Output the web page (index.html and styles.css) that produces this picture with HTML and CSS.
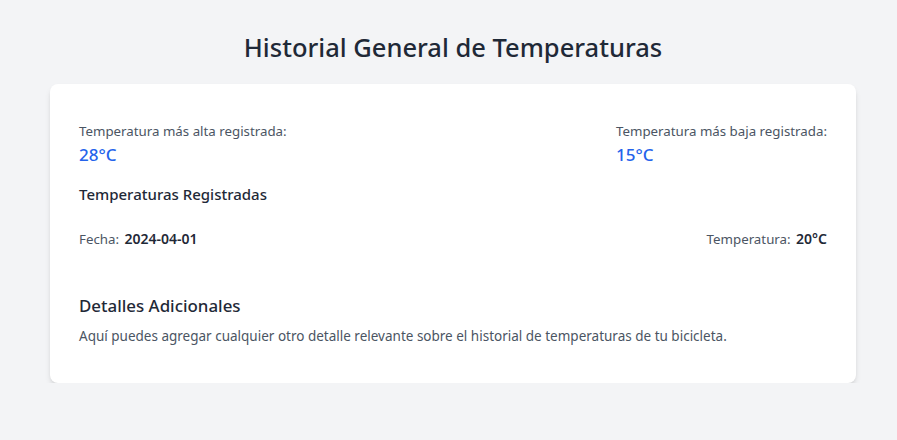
FILE: index.html
```html
<!DOCTYPE html>
<html lang="es">
<head>
<meta charset="utf-8">
<link rel="stylesheet" href="styles.css">
</head>
<body>
<main class="page">
  <h1 class="title">Historial General de Temperaturas</h1>
  <section class="card">
    <div class="extremes">
      <div class="stat">
        <p class="stat-label">Temperatura más alta registrada:</p>
        <p class="stat-value">28°C</p>
      </div>
      <div class="stat">
        <p class="stat-label">Temperatura más baja registrada:</p>
        <p class="stat-value">15°C</p>
      </div>
    </div>
    <h2 class="section-title">Temperaturas Registradas</h2>
    <div class="record">
      <p class="field"><span class="field-label">Fecha:</span> <span class="field-value">2024-04-01</span></p>
      <p class="field"><span class="field-label">Temperatura:</span> <span class="field-value">20°C</span></p>
    </div>
    <h2 class="section-title details-title">Detalles Adicionales</h2>
    <p class="details-text">Aquí puedes agregar cualquier otro detalle relevante sobre el historial de temperaturas de tu bicicleta.</p>
  </section>
</main>
</body>
</html>
```
FILE: styles.css
```css
* { box-sizing: border-box; }
html, body { margin: 0; padding: 0; }
body {
  background: #f3f4f6;
  font-family: "Noto Sans", "Open Sans", sans-serif;
  color: #1f2937;
}
p, h1, h2 { margin: 0; }
.page {
  padding: 31px 41px 0 50px;
}
.title {
  text-align: center;
  font-size: 25.5px;
  line-height: 32px;
  font-weight: 500;
  color: #1f2937;
  margin-bottom: 21px;
}
.card {
  background: #fff;
  border-radius: 8px;
  box-shadow: 0 4px 6px -1px rgba(0,0,0,0.12), 0 2px 4px -2px rgba(0,0,0,0.1);
  padding: 37px 29px 37px 29px;
}
.extremes {
  display: flex;
  justify-content: space-between;
}
.stat-label {
  font-size: 13.3px;
  line-height: 20px;
  color: #4b5563;
}
.stat-value {
  font-size: 17px;
  line-height: 28px;
  font-weight: 500;
  color: #2563eb;
}
.section-title {
  font-size: 15px;
  line-height: 24px;
  font-weight: 500;
  color: #1f2937;
  margin-top: 13px;
}
.record {
  display: flex;
  justify-content: space-between;
  margin-top: 23px;
}
.field {
  font-size: 13.3px;
  line-height: 20px;
}
.field-label { color: #4b5563; }
.field-value { font-weight: 600; font-size: 14px; color: #1f2937; margin-left: 2px; }
.details-title { margin-top: 45px; font-size: 16.9px; }
.details-text {
  margin-top: 8px;
  font-size: 13.5px;
  line-height: 20px;
  color: #4b5563;
}
```
